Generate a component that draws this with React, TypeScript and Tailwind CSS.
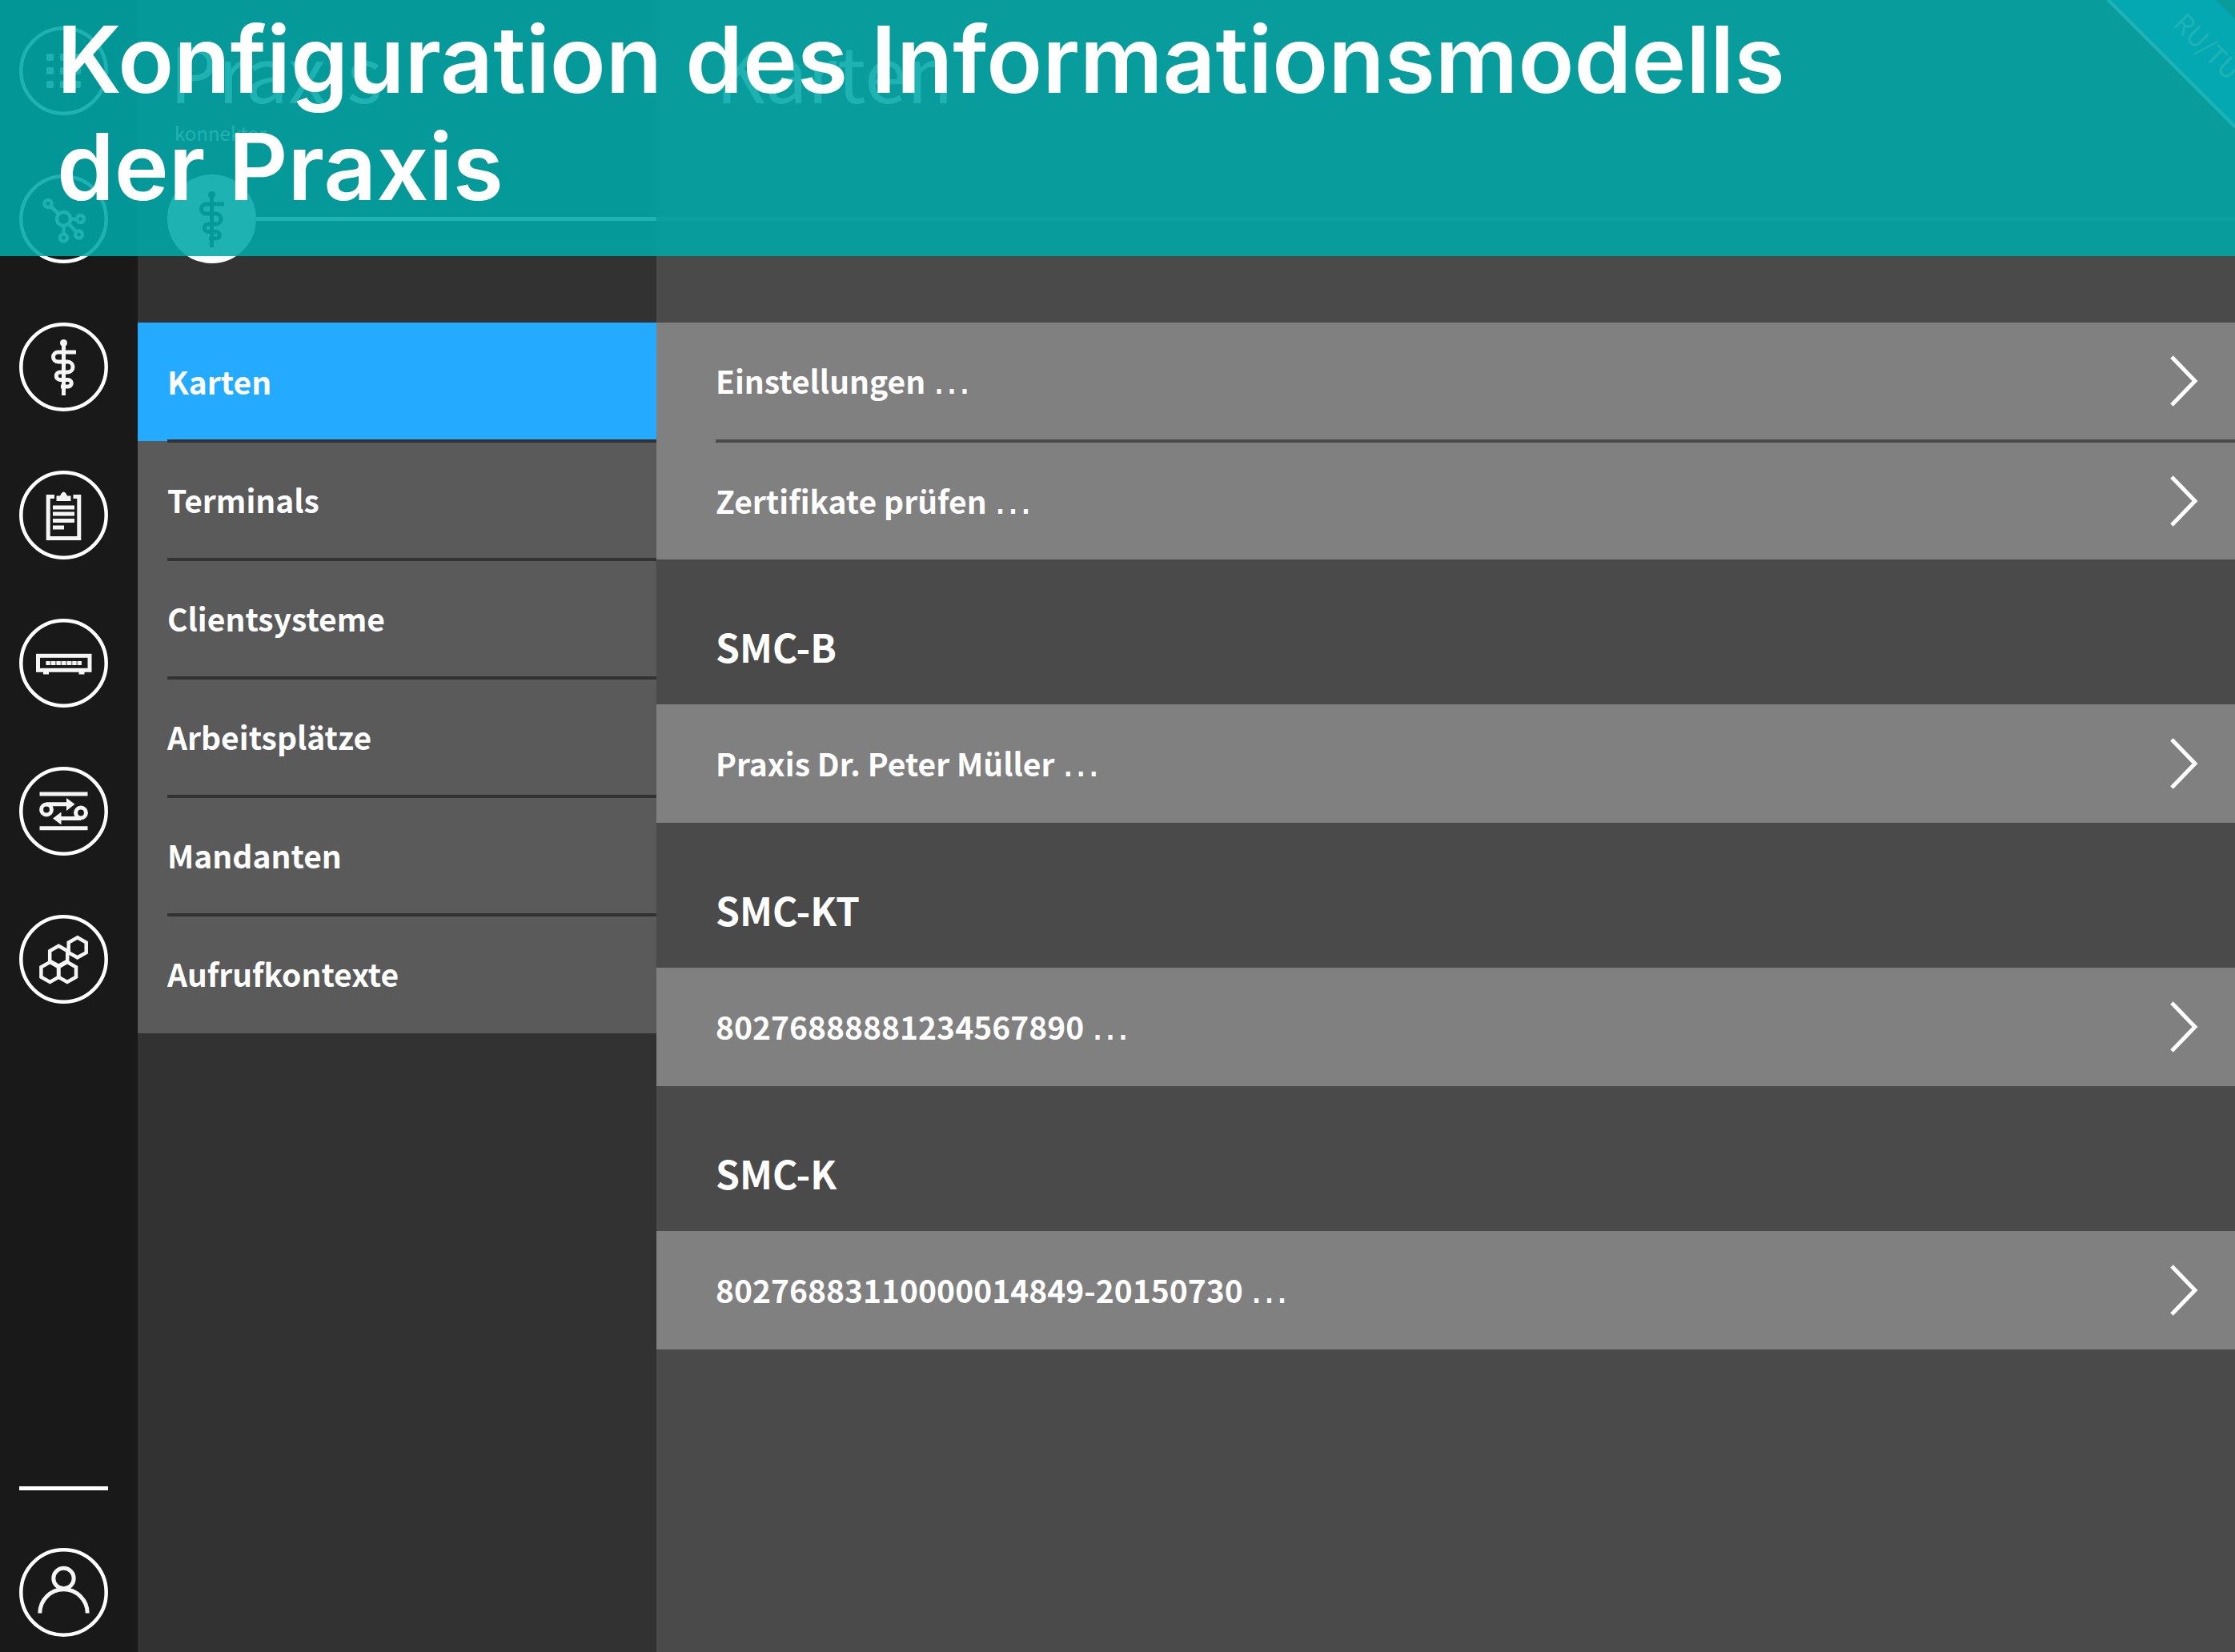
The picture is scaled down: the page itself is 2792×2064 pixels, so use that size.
import type { ReactNode } from "react";

/* Round rail icon: a 111px ring with a drawing inside. */
function RingIcon({ children, filled = false }: { children: ReactNode; filled?: boolean }) {
  return (
    <svg
      viewBox="0 0 111 111"
      className="block size-[111px] shrink-0"
      fill="none"
      stroke={filled ? "#323232" : "#f5f5f5"}
      strokeWidth="4.5"
      aria-hidden="true"
    >
      <circle cx="55.5" cy="55.5" r="53.2" stroke="#ffffff" fill={filled ? "#ffffff" : "none"} />
      {children}
    </svg>
  );
}

function StaffDrawing({ color }: { color: string }) {
  return (
    <g stroke={color} strokeWidth="5">
      <circle cx="55.5" cy="25.5" r="4.5" fill={color} stroke="none" />
      <path d="M55.5 25V91" />
      <path d="M71 37H48.5a6 6 0 0 0 0 12H60.5a6.5 6.5 0 0 1 0 13H51a4.7 4.7 0 0 0 0 9.4H61a4.3 4.3 0 0 1 0 8.6H52" />
    </g>
  );
}

function GridDrawing() {
  const steps = [38.5, 55.5, 72.5];
  return (
    <g fill="#f5f5f5" stroke="none">
      {steps.map((y) => steps.map((x) => <rect key={`${x}-${y}`} x={x - 4.5} y={y - 4.5} width="9" height="9" rx="2" />))}
    </g>
  );
}

function NetworkDrawing() {
  return (
    <g strokeWidth="4.5">
      <circle cx="55.5" cy="55.5" r="8.5" />
      <circle cx="36" cy="36.5" r="4.5" />
      <circle cx="76.5" cy="55.5" r="4.5" />
      <circle cx="74.5" cy="75" r="4.5" />
      <circle cx="55.5" cy="79" r="4.5" />
      <path d="M39.5 40L49.5 49.5M64 55.5H72M61.5 61.5L71.5 71.5M55.5 64V74.5" />
    </g>
  );
}

function ClipboardDrawing() {
  return (
    <g strokeWidth="5">
      <path d="M44 32.5H36.2V84.5H74.8V32.5H67.5" />
      <path d="M46.5 38V31.5H51L53 28Q55.5 25 58 28L60 31.5H64.5V38Z" fill="#f5f5f5" stroke="none" />
      <path d="M42 46H69M42 54H69M42 62.5H69M42 71H56" />
    </g>
  );
}

function RouterDrawing() {
  return (
    <g strokeWidth="5">
      <rect x="23.5" y="46.3" width="64.5" height="18" />
      <path d="M33.5 55.5H78" stroke="#8c8c8c" />
      <path d="M33.5 55.5H78" strokeDasharray="4.8 1.8" />
      <path d="M30 67.5H37M74.5 67.5H81.5" strokeWidth="4" />
    </g>
  );
}

function ExchangeDrawing() {
  return (
    <g strokeWidth="5">
      <path d="M25.5 34H85.5M25.5 76.8H85.5" />
      <circle cx="34" cy="53.5" r="6.4" />
      <circle cx="77" cy="57.5" r="6.4" />
      <path d="M34 46.7H60M77 64.5H51" />
      <path d="M59 39L69.5 46.7L59 55ZM52.5 56.5L42 64.5L52.5 72.5Z" fill="#f5f5f5" stroke="none" />
    </g>
  );
}

function HexagonsDrawing() {
  const cells = [
    [72.7, 40.8],
    [49.2, 51.3],
    [38.4, 71.5],
    [60, 71.5],
  ];
  return (
    <g strokeWidth="4.5">
      {cells.map(([x, y]) => (
        <path key={`${x}-${y}`} d={`M${x} ${y - 12.5}l11 6.2v12.6l-11 6.2l-11 -6.2v-12.6z`} />
      ))}
    </g>
  );
}

function PersonDrawing() {
  return (
    <g strokeWidth="5">
      <circle cx="55.5" cy="38" r="12.7" />
      <path d="M25.8 81.5a29.7 29.7 0 0 1 59.4 0" />
    </g>
  );
}

const railItems = [
  { label: "Übersicht", icon: <GridDrawing /> },
  { label: "Netzwerk", icon: <NetworkDrawing /> },
  { label: "Praxis", icon: <StaffDrawing color="#f5f5f5" /> },
  { label: "Protokolle", icon: <ClipboardDrawing /> },
  { label: "Konnektor", icon: <RouterDrawing /> },
  { label: "Verbindungen", icon: <ExchangeDrawing /> },
  { label: "Module", icon: <HexagonsDrawing /> },
];

const menu = ["Karten", "Terminals", "Clientsysteme", "Arbeitsplätze", "Mandanten", "Aufrufkontexte"];

const groups = [
  { title: "SMC-B", row: "Praxis Dr. Peter Müller" },
  { title: "SMC-KT", row: "80276888881234567890" },
  { title: "SMC-K", row: "80276883110000014849-20150730" },
];

function Row({ text }: { text: string }) {
  return (
    <button
      type="button"
      className="flex w-full grow items-center justify-between bg-[#808080] pr-[46px] pl-[74px] text-left text-[39px] leading-[60px] font-bold"
    >
      <span className="pb-[2px]">
        {text} <span className="font-['DejaVu_Sans',sans-serif] text-[48px] leading-none font-normal">…</span>
      </span>
      <svg viewBox="0 0 36 66" className="h-[66px] w-[36px]" fill="none" stroke="#ffffff" strokeWidth="5" aria-hidden="true">
        <path d="M3 3L32 33L3 63" />
      </svg>
    </button>
  );
}

export default function App() {
  return (
    <div
      lang="de"
      className="relative flex min-h-screen w-full overflow-hidden bg-[#4a4a4a] font-['Noto_Sans_CJK_SC','Noto_Sans',sans-serif] text-white"
    >
      <nav className="flex w-[172px] shrink-0 flex-col justify-between bg-[#191919] pt-[33px] pb-[19px] pl-[24px]">
        <div className="flex flex-col gap-[74px]">
          {railItems.map((item) => (
            <button key={item.label} type="button" aria-label={item.label} className="size-[111px]">
              <RingIcon>{item.icon}</RingIcon>
            </button>
          ))}
        </div>
        <div className="flex flex-col gap-[72px]">
          <div className="h-[5px] w-[111px] bg-white" />
          <button type="button" aria-label="Benutzer" className="size-[111px]">
            <RingIcon>
              <PersonDrawing />
            </RingIcon>
          </button>
        </div>
      </nav>

      <aside className="w-[648px] shrink-0 bg-[#323232]">
        <header className="flex h-[403px] flex-col pl-[37px]">
          <h2 className="pt-[28px] pl-[3px] text-[95px] leading-[120px] font-normal">Praxis</h2>
          <p className="pl-[9px] text-[24px] leading-[36px]">konnektor</p>
          <div className="flex items-center pt-[34px]">
            <RingIcon filled>
              <StaffDrawing color="#323232" />
            </RingIcon>
            <div className="h-[5px] grow bg-white" />
          </div>
        </header>
        <ul>
          {menu.map((label, i) => (
            <li key={label} className={i === 0 ? "relative bg-[#24aaff]" : "relative bg-[#5a5a5a]"}>
              <button
                type="button"
                className="flex h-[148px] w-full items-center pb-[2px] pl-[37px] text-left text-[39px] leading-[60px] font-bold"
              >
                {label}
              </button>
              {i < menu.length - 1 && <div className="absolute right-0 -bottom-[2px] left-[37px] z-10 h-[4px] bg-[#323232]" />}
            </li>
          ))}
        </ul>
      </aside>

      <main className="min-w-0 grow">
        <header className="h-[403px]">
          <h2 className="pt-[28px] pl-[74px] text-[95px] leading-[120px] font-normal">Karten</h2>
          <div className="mt-[123px] h-[5px] bg-[#6c6c6c]" />
        </header>
        <div className="flex h-[296px] flex-col">
          <Row text="Einstellungen" />
          <div className="flex h-[4px] bg-[#808080] pl-[74px]">
            <div className="grow bg-[#4a4a4a]" />
          </div>
          <Row text="Zertifikate prüfen" />
        </div>
        {groups.map((group) => (
          <section key={group.title}>
            <h3 className="flex h-[181px] items-center pt-[34px] pl-[74px] text-[48px] leading-[72px] font-bold">{group.title}</h3>
            <div className="flex h-[148px]">
              <Row text={group.row} />
            </div>
          </section>
        ))}
      </main>

      <div className="absolute top-0 right-0 size-[160px] overflow-hidden">
        <div className="absolute -top-[120px] left-[16px] flex h-[97px] w-[500px] origin-top-left rotate-45 items-center border-b-4 border-white bg-[#24aaff] pl-[153px] text-[33px] leading-[40px]">
          RU/TU
        </div>
      </div>

      <div className="absolute inset-x-0 top-0 z-20 h-[320px] bg-[#00a7a7]/88" />
      <h1 className="absolute top-0 left-0 z-30 pt-[8px] pl-[71px] font-['Inter',sans-serif] text-[115px] leading-[134px] font-semibold">
        Konfiguration des Informationsmodells
        <br />
        der Praxis
      </h1>
    </div>
  );
}
